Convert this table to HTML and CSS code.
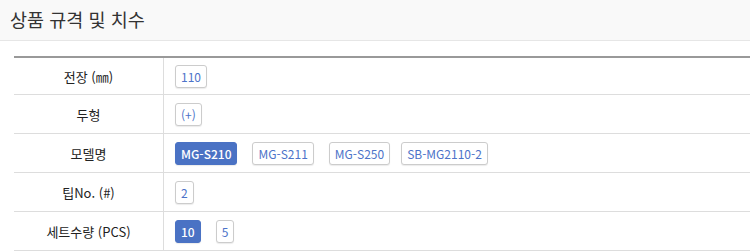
FILE: index.html
```html
<!DOCTYPE html>
<html lang="ko">
<head>
<meta charset="utf-8">
<title>상품 규격 및 치수</title>
<link rel="stylesheet" href="styles.css">
</head>
<body>
<div class="head"><h2 class="title">상품 규격 및 치수</h2></div>
<div class="spec">
  <div class="row first">
    <div class="label">전장 (㎜)</div>
    <div class="value"><span class="opt">110</span></div>
  </div>
  <div class="row">
    <div class="label">두형</div>
    <div class="value"><span class="opt">(+)</span></div>
  </div>
  <div class="row">
    <div class="label">모델명</div>
    <div class="value"><span class="opt on">MG-S210</span><span class="opt">MG-S211</span><span class="opt">MG-S250</span><span class="opt last">SB-MG2110-2</span></div>
  </div>
  <div class="row">
    <div class="label">팁No. (#)</div>
    <div class="value"><span class="opt">2</span></div>
  </div>
  <div class="row">
    <div class="label">세트수량 (PCS)</div>
    <div class="value"><span class="opt on">10</span><span class="opt">5</span></div>
  </div>
</div>
</body>
</html>
```

FILE: styles.css
```css
html, body {
  margin: 0;
  padding: 0;
  background: #fff;
  font-family: "Noto Sans CJK KR", "Noto Sans", sans-serif;
  color: #333;
}
.head {
  height: 40px;
  background: #f9f9f9;
  border-bottom: 1px solid #e6e6e6;
  display: flex;
  align-items: center;
  padding-left: 10px;
}
.title {
  margin: 0;
  font-size: 18.5px;
  font-weight: 400;
  color: #333;
  line-height: 1;
  position: relative;
  top: -1px;
}
.spec {
  margin: 15px 0 0 14px;
  border-top: 2px solid #999;
}
.row {
  display: grid;
  grid-template-columns: 150px 1fr;
  height: 38px;
  border-bottom: 1px solid #ddd;
}
.row.first {
  height: 36px;
}
.label {
  border-right: 1px solid #ddd;
  display: flex;
  align-items: center;
  justify-content: center;
  font-size: 13px;
  color: #222;
}
.value {
  display: flex;
  align-items: center;
  gap: 15px;
  padding-left: 11px;
}
.opt {
  display: inline-flex;
  align-items: center;
  height: 21px;
  padding: 0 5px;
  border: 1px solid #ccc;
  border-radius: 3px;
  box-shadow: 0 1px 1px rgba(0,0,0,0.08);
  font-size: 12px;
  color: #4d73c9;
  background: #fff;
}
.opt.last {
  margin-left: -4px;
}
.opt.on {
  background: #4a72c4;
  border-color: #4a72c4;
  color: #fff;
  font-weight: 500;
}
```
